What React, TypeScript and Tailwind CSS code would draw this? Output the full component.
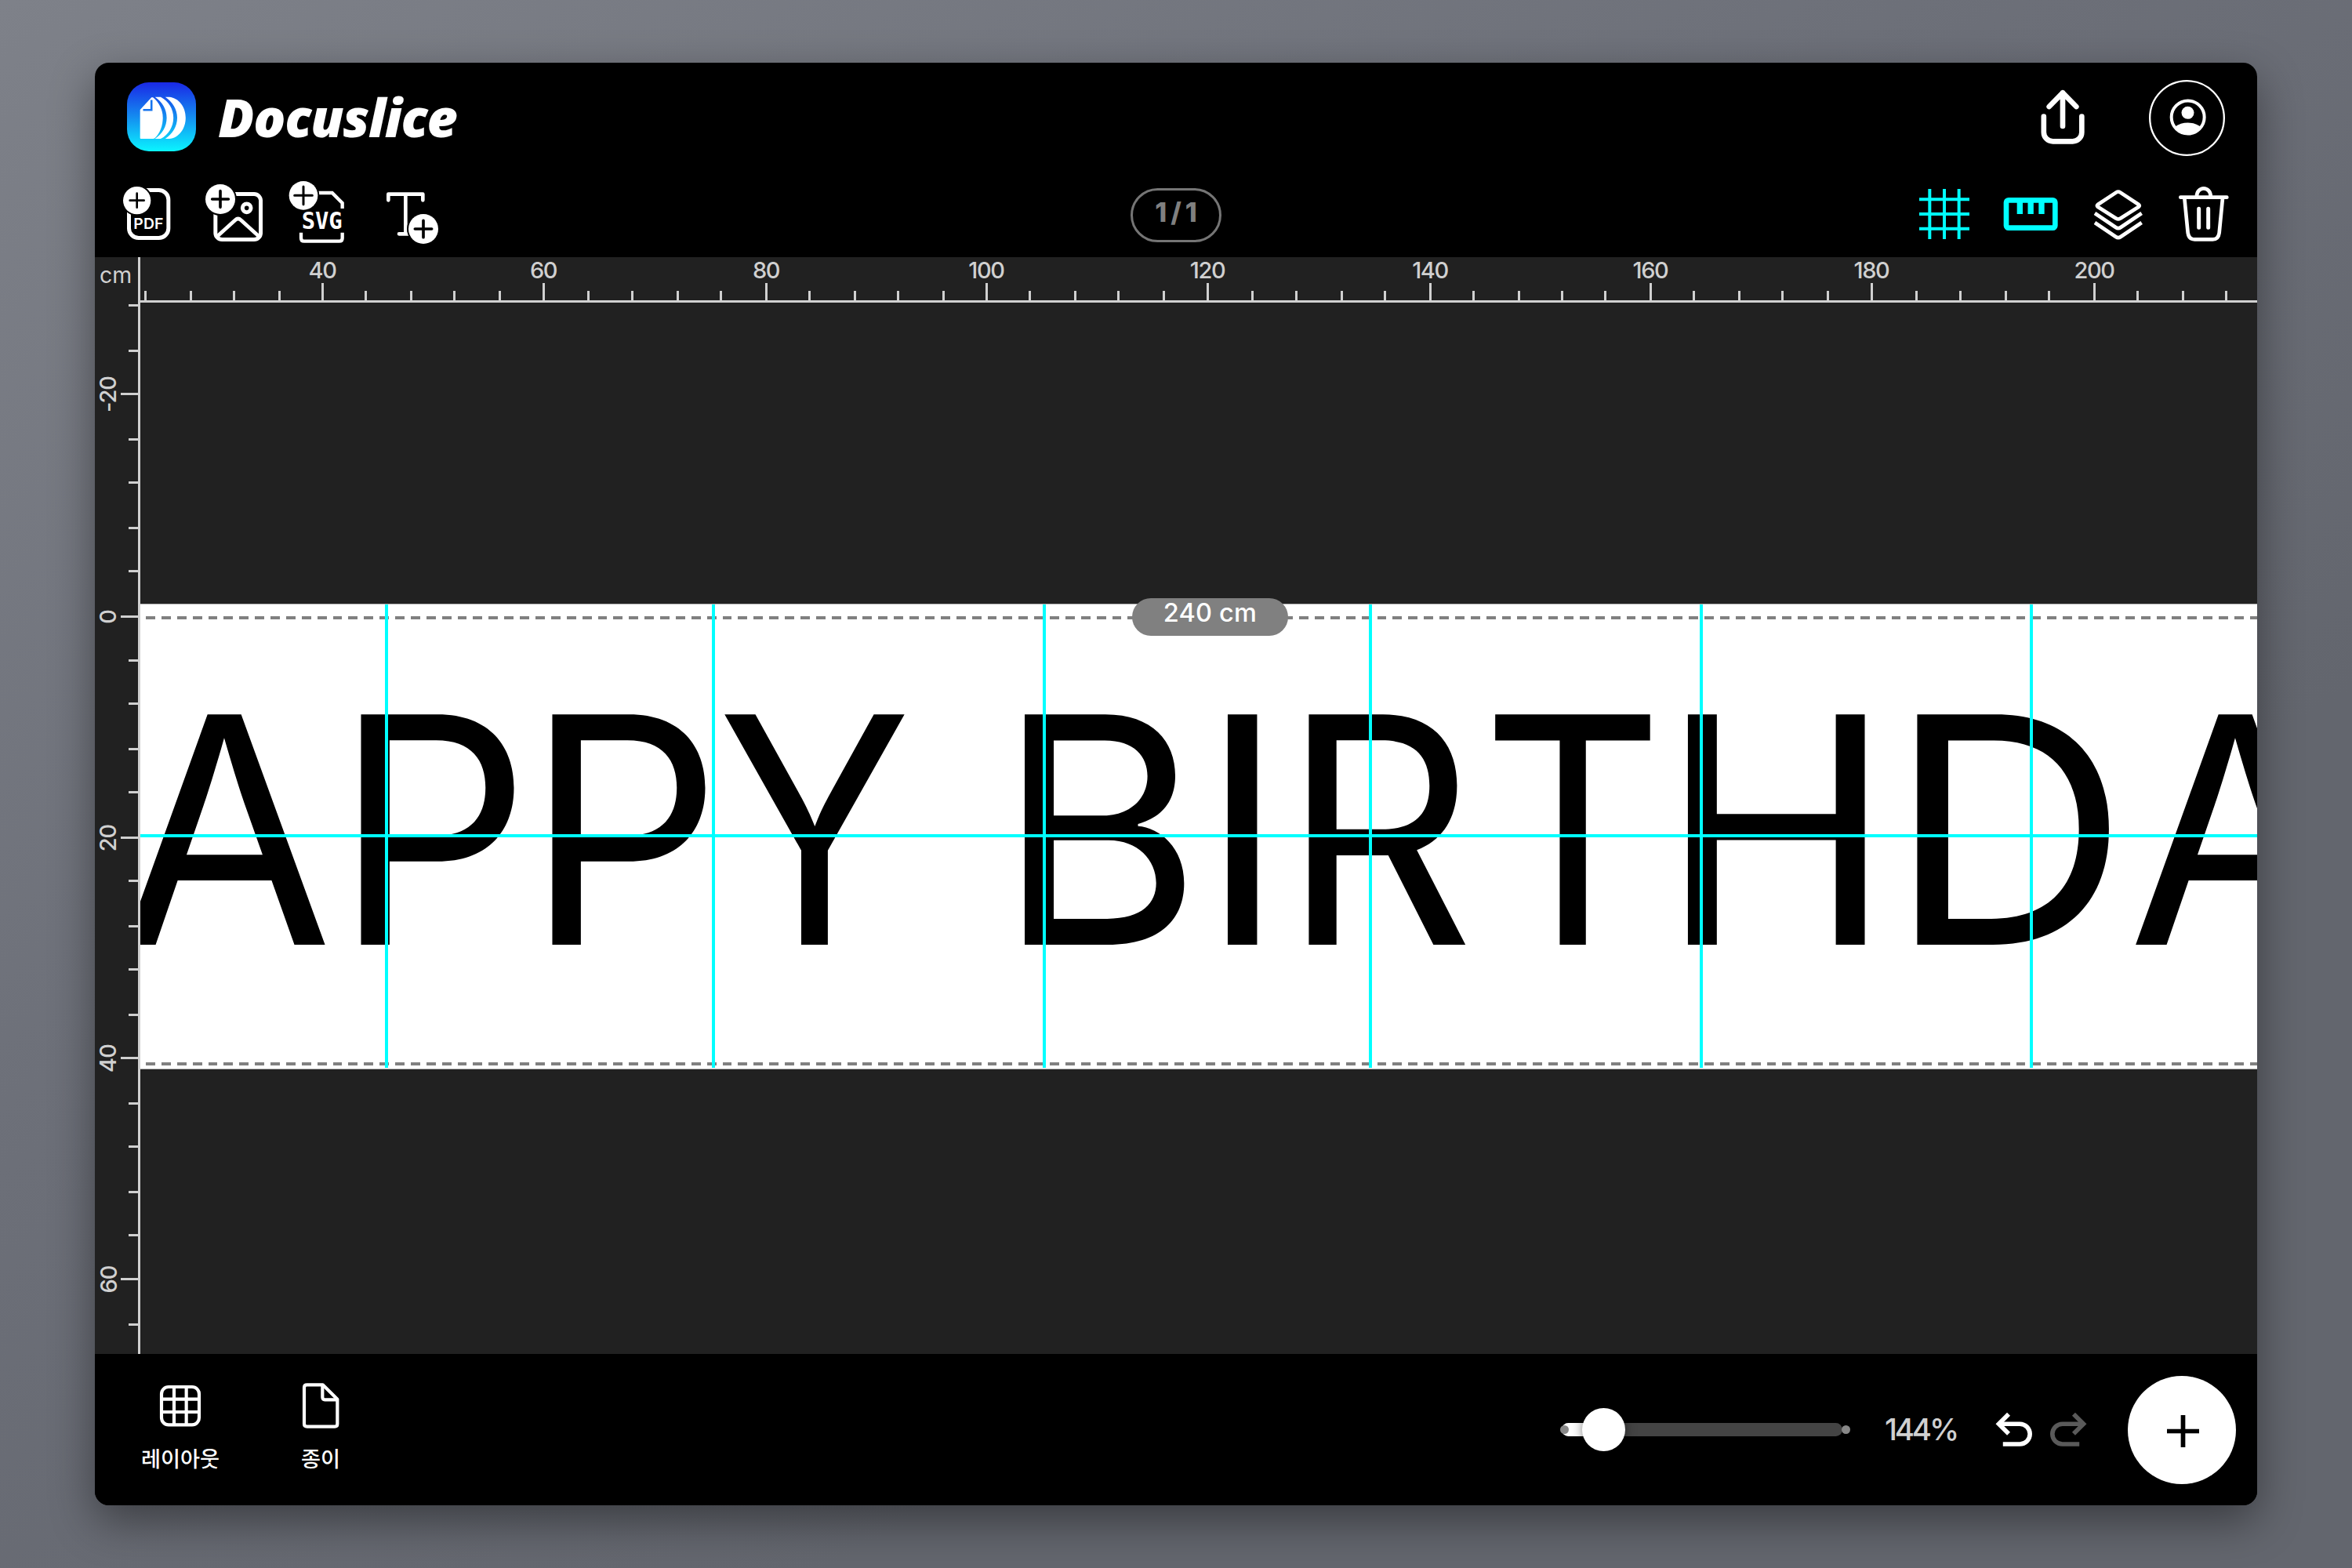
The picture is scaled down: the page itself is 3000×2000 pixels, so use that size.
import React from 'react';

interface RulerTick {
  pos: number;
  value: number | null;
}

interface Letter {
  char: string;
  left: number;
  scale: number;
}

// One ruler unit is snapped to a whole device step, which is why gaps differ by a few px
const STEP = 2.759;
const TICK_SPACING = 20.465;

const buildTicks = (origin: number, start: number, from: number, to: number, valueAtZero: number): RulerTick[] => {
  const ticks: RulerTick[] = [];
  for (let k = from; k <= to; k++) {
    const n = Math.floor(start + k * TICK_SPACING);
    ticks.push({
      pos: Math.round(n * STEP - origin),
      value: k % 5 === 0 ? valueAtZero + k * 4 : null,
    });
  }
  return ticks;
};

const horizontalTicks = buildTicks(58.6, 105.49, -4, 43, 40);
const verticalTicks = buildTicks(306.9, 256, -7, 16, 0);

const verticalGuides = [312, 729, 1151, 1567, 1989, 2410];

const bannerLetters: Letter[] = [
  { char: 'A', left: -30, scale: 0.99 },
  { char: 'P', left: 246.5, scale: 0.972 },
  { char: 'P', left: 491.2, scale: 0.972 },
  { char: 'Y', left: 736, scale: 0.905 },
  { char: 'B', left: 1093, scale: 0.988 },
  { char: 'I', left: 1351.5, scale: 1 },
  { char: 'R', left: 1456.5, scale: 0.942 },
  { char: 'T', left: 1711, scale: 0.89 },
  { char: 'H', left: 1939, scale: 0.985 },
  { char: 'D', left: 2228.5, scale: 1.055 },
  { char: 'A', left: 2535, scale: 0.99 },
];

const PlusBadge = ({ cx, cy, r, arm, width }: { cx: number; cy: number; r: number; arm: number; width: number }) => (
  <>
    <circle cx={cx} cy={cy} r={r + 6} fill="#000" />
    <circle cx={cx} cy={cy} r={r} fill="#fff" />
    <path
      d={`M${cx - arm} ${cy}H${cx + arm}M${cx} ${cy - arm}V${cy + arm}`}
      stroke="#000"
      strokeWidth={width}
      strokeLinecap="round"
    />
  </>
);

const LogoMark = () => (
  <svg className="size-[88px] shrink-0" viewBox="0 0 88 88" fill="none">
    <defs>
      <linearGradient id="logo" x1="0" y1="0" x2="0" y2="1">
        <stop offset="0" stopColor="#1a28e6" />
        <stop offset="0.5" stopColor="#148cf0" />
        <stop offset="1" stopColor="#0af5ff" />
      </linearGradient>
    </defs>
    <rect width="88" height="88" rx="28" fill="url(#logo)" />
    <path d="M16.7 35 31 19.4Q32 18.6 33.5 19.6C41 26 45.7 35 45.7 45.2S42 65 35.4 71.2Q34.5 72 33 72H17.7Q16.7 72 16.7 71Z" fill="#fff" />
    <path d="M20.5 35.3H31.2V22.5" stroke="#1674ee" strokeWidth="2.6" />
    <path d="M35.7 18.7H43C53 24 59.2 34 59.2 45.2S53 67 43 72H35.7C45 66 50.6 56 50.6 45.2S45 25 35.7 18.7Z" fill="#fff" />
    <path d="M48.8 18.7H54C66 20 74.8 31 74.8 45.2S66 71 54 72H48.8C58 66 64 56 64 45.2S58 25 48.8 18.7Z" fill="#fff" />
  </svg>
);

const AddPdfIcon = () => (
  <svg className="w-[65px] h-[82px]" viewBox="165 510 195 246" fill="none">
    <rect x="193.5" y="547.5" width="151" height="183" rx="37" stroke="#fff" strokeWidth="15" />
    <PlusBadge cx={224} cy={587} r={53} arm={27} width={8} />
    <text x="211" y="697" fontSize="58" textLength="114" className="font-['Inter'] font-semibold" fill="#fff">PDF</text>
  </svg>
);

const AddImageIcon = () => (
  <svg className="w-[77px] h-[82px]" viewBox="480 510 231 246" fill="none" stroke="#fff" strokeWidth="15">
    <rect x="524.5" y="562.5" width="173" height="174" rx="25" />
    <circle cx="644" cy="616" r="16" />
    <path d="M532 724 600 662Q611 652 622 662L690 724" strokeWidth="14" />
    <g stroke="none">
      <PlusBadge cx={543} cy={582} r={57} arm={31} width={11} />
    </g>
  </svg>
);

const AddSvgIcon = () => (
  <svg className="w-[74px] h-[82px]" viewBox="801 510 222 246" fill="none" stroke="#fff" strokeWidth="13">
    <path d="M900 558H971L1010 597V618" />
    <path d="M852 710V731Q852 743 864 743H998Q1010 743 1010 731V710" />
    <text
      x="854"
      y="697"
      fontSize="92"
      textLength="156"
      lengthAdjust="spacingAndGlyphs"
      className="font-['DejaVu_Sans_Mono'] font-bold"
      fill="#fff"
      stroke="none"
    >
      SVG
    </text>
    <g stroke="none">
      <PlusBadge cx={861} cy={568} r={55} arm={34} width={9} />
    </g>
  </svg>
);

const AddTextIcon = () => (
  <svg className="w-[71px] h-[82px]" viewBox="1170 510 213 246" fill="none">
    <path
      d="M1186 586V563H1318V586M1252 563V715M1227 715H1265"
      stroke="#fff"
      strokeWidth="14"
      strokeLinecap="round"
      strokeLinejoin="round"
    />
    <PlusBadge cx={1320} cy={696} r={57} arm={32} width={11} />
  </svg>
);

const ShareIcon = () => (
  <svg className="w-[62px] h-[75px]" viewBox="600 155 186 225" fill="none" stroke="#fff" strokeWidth="20" strokeLinecap="round" strokeLinejoin="round">
    <path d="M693 174V302M641 227 693 174 745 227" />
    <path d="M620.5 265V325A35 35 0 0 0 655.5 360H731A35 35 0 0 0 766 325V265" />
  </svg>
);

const AccountIcon = () => (
  <svg className="size-[97px]" viewBox="1024.5 124.5 291 291" fill="none">
    <circle cx="1170" cy="270" r="142" stroke="#fff" strokeWidth="7" />
    <circle cx="1173.5" cy="267" r="63" stroke="#fff" strokeWidth="12" />
    <circle cx="1173" cy="250" r="24" fill="#fff" />
    <path d="M1124 304Q1145 288 1173.5 288T1223 304Q1206 334 1173.5 334T1124 304Z" fill="#fff" />
  </svg>
);

const GridLinesIcon = () => (
  <svg className="w-[68px] h-[75px]" viewBox="136 525 204 225" stroke="#00ffff" strokeWidth="12">
    <path d="M182 543V735M238 543V735M294 543V735M142 582.5H334M142 639H334M142 695H334" />
  </svg>
);

const RulerIcon = () => (
  <svg className="w-[72px] h-[75px]" viewBox="460 525 216 225" fill="none" stroke="#00ffff">
    <rect x="475" y="586" width="187" height="106" rx="9" strokeWidth="20" />
    <path d="M527 590V639M568.5 590V639M610 590V639" strokeWidth="22" />
  </svg>
);

const LayersIcon = () => (
  <svg className="w-[64px] h-[75px]" viewBox="810 525 192 225" fill="none" stroke="#fff" strokeWidth="14" strokeLinejoin="round">
    <path d="M898 556Q905.5 551 913 556L984 603Q989 607 984 611L913 656Q905.5 661 898 656L827 611Q822 607 827 603Z" />
    <path d="M816 636 896 690Q905.5 696.5 915 690L995 636" />
    <path d="M816 672 896 726Q905.5 732.5 915 726L995 672" />
  </svg>
);

const TrashIcon = () => (
  <svg className="w-[68px] h-[75px]" viewBox="1130 525 204 225" fill="none" stroke="#fff" strokeWidth="14" strokeLinecap="round">
    <path d="M1143 575H1320" />
    <path d="M1205 570A26.5 29 0 0 1 1258 570" strokeLinecap="butt" />
    <path d="M1158 578 1171 711Q1174 736 1197 736H1266Q1288 736 1291 711L1304 578" />
    <path d="M1213 619V691M1249 619V691" strokeWidth="15" />
  </svg>
);

const LayoutIcon = () => (
  <svg className="size-[54px]" viewBox="308 194 162 162" fill="none" stroke="#fff" strokeWidth="12.5">
    <rect x="317" y="203" width="144" height="145" rx="27" />
    <path d="M365 203V348M412 203V348M317 250H461M317 299H461" />
  </svg>
);

const PaperIcon = () => (
  <svg className="w-[48px] h-[60px]" viewBox="863 185 144 180" fill="none" stroke="#fff" strokeWidth="12.5" strokeLinejoin="round">
    <path d="M883 195H943L999 250V345Q999 355 989 355H883Q872 355 872 345V205Q872 195 883 195Z" />
    <path d="M942 197V243Q942 252 951 252H998" />
  </svg>
);

const UndoIcon = ({ className }: { className?: string }) => (
  <svg className={className} viewBox="495 183 144 136" fill="none" stroke="currentColor" strokeWidth="17">
    <path d="M546 191 508 229 546 267" />
    <path d="M510 229H589A39 39 0 0 1 589 307H524" />
  </svg>
);

const TopBar = () => (
  <div className="flex h-[140px] items-center justify-between pl-[41px] pr-[41px]">
    <div className="flex items-center pb-[2px]">
      <LogoMark />
      <h1 className="ml-7 font-['Open_Sans'] text-[68px] font-extrabold italic leading-none tracking-[-1.3px] text-white">
        Docuslice
      </h1>
    </div>
    <div className="flex items-center gap-[79px]">
      <button className="pb-[2px]"><ShareIcon /></button>
      <button><AccountIcon /></button>
    </div>
  </div>
);

const Toolbar = () => (
  <div className="grid h-[108px] grid-cols-[1fr_auto_1fr] items-center pl-[34px] pr-[34px]">
    <div className="mb-[6px] flex items-center">
      <button><AddPdfIcon /></button>
      <button className="ml-10"><AddImageIcon /></button>
      <button className="ml-[30px]"><AddSvgIcon /></button>
      <button className="ml-[49px]"><AddTextIcon /></button>
    </div>
    <div className="flex h-[69px] w-[116px] items-center justify-center rounded-full border-[3px] border-[#757575] pb-[6px] pl-[5px] font-['Inter'] text-[34px] font-extrabold leading-none tracking-[5px] text-[#808080]">
      1/1
    </div>
    <div className="mb-[3px] flex items-center justify-end">
      <button><GridLinesIcon /></button>
      <button className="ml-10"><RulerIcon /></button>
      <button className="ml-11"><LayersIcon /></button>
      <button className="ml-[43px]"><TrashIcon /></button>
    </div>
  </div>
);

const HorizontalRuler = () => (
  <div className="relative overflow-hidden border-b-[3px] border-[#d0d0d0]">
    {horizontalTicks.map(({ pos, value }) => (
      <div key={pos} className="absolute bottom-0" style={{ left: pos }}>
        <div className={value === null ? 'h-3 w-[3px] bg-[#d0d0d0]' : 'h-[22px] w-[3px] bg-[#d0d0d0]'} />
        {value !== null && (
          <span className="absolute bottom-[24px] left-px -translate-x-1/2 text-[29px] font-[450] leading-none tracking-[-1.4px]">
            {value}
          </span>
        )}
      </div>
    ))}
  </div>
);

const VerticalRuler = () => (
  <div className="relative overflow-hidden border-r-[3px] border-[#d0d0d0]">
    {verticalTicks.map(({ pos, value }) => (
      <div key={pos} className="absolute right-0" style={{ top: pos }}>
        <div className={value === null ? 'h-[3px] w-3 bg-[#d0d0d0]' : 'h-[3px] w-[22px] bg-[#d0d0d0]'} />
        {value !== null && (
          <span className="absolute right-[38.5px] top-[1.5px] -translate-y-1/2 translate-x-1/2 -rotate-90 text-[29px] font-[450] leading-none tracking-[-1px]">
            {value}
          </span>
        )}
      </div>
    ))}
  </div>
);

const Canvas = () => (
  <div className="relative overflow-hidden">
    {/* Paper */}
    <div className="absolute inset-x-0 top-[384px] h-[594px] border-y border-[#b0b0b0] bg-white" />
    <div className="absolute left-[7px] right-0 top-[400px] h-1 bg-[repeating-linear-gradient(90deg,#808080_0px_11.9px,transparent_11.9px_19.88px)]" />
    <div className="absolute left-[7px] right-0 top-[969px] h-1 bg-[repeating-linear-gradient(90deg,#808080_0px_11.9px,transparent_11.9px_19.88px)]" />

    {/* Banner text */}
    <h2 className="text-black">
      {bannerLetters.map(({ char, left, scale }, i) => (
        <span
          key={i}
          className="absolute top-[471.4px] origin-left text-[403.6px] font-[440] leading-none"
          style={{ left, transform: `scaleX(${scale})` }}
        >
          {char}
        </span>
      ))}
    </h2>

    {/* Page guides */}
    {verticalGuides.map((left) => (
      <div key={left} className="absolute top-[385px] h-[591px] w-1 bg-[#00ffff]" style={{ left }} />
    ))}
    <div className="absolute inset-x-0 top-[678px] h-1 bg-[#00ffff]" />

    {/* Width label */}
    <div className="absolute left-[1265px] top-[377px] flex h-[48px] w-[199px] justify-center rounded-[24px] bg-[#808080] pt-[3px] text-[32.5px] font-[450] leading-none tracking-[0.2px] text-white">
      240 cm
    </div>
  </div>
);

const BottomBar = () => (
  <div className="flex h-[193px] items-center justify-between bg-black pl-[59px] pr-[27px] text-white">
    <div className="flex items-end gap-[104px] pb-[10px] text-[27.2px] font-medium leading-[30px] font-['Noto_Sans_CJK_KR',sans-serif]">
      <button className="flex flex-col items-center">
        <LayoutIcon />
        <span className="mt-6">레이아웃</span>
      </button>
      <button className="flex flex-col items-center">
        <PaperIcon />
        <span className="mt-[21px]">종이</span>
      </button>
    </div>
    <div className="flex items-center">
      <div className="relative h-[17px] w-[358px] rounded-full bg-[#444]">
        <div className="h-full w-12 rounded-full bg-white" />
        <div className="absolute left-[-2px] top-[3px] size-[11px] rounded-full bg-[#888]" />
        <div className="absolute right-[-10px] top-[3px] size-[11px] rounded-full bg-[#888]" />
        <div className="absolute left-[26px] top-[-19px] size-[55px] rounded-full bg-white shadow-[0_0_14px_rgba(0,0,0,0.5)]" />
      </div>
      <span className="ml-[54px] w-[96px] font-['Inter'] text-[38.5px] font-[450] leading-none tracking-[-3.2px] text-[#d0d0d0]">144%</span>
      <button className="ml-[45px]"><UndoIcon className="h-[45px] w-12 text-white" /></button>
      <button className="ml-[21px]"><UndoIcon className="h-[45px] w-12 -scale-x-100 text-[#5a5a5a]" /></button>
      <button className="ml-[52px] flex size-[138px] items-center justify-center rounded-full bg-white">
        <svg className="ml-[3px] mt-[3px] size-[41px]" viewBox="0 0 41 41" stroke="#000" strokeWidth="5.7">
          <path d="M0 20.5H41M20.5 0V41" />
        </svg>
      </button>
    </div>
  </div>
);

export default function App() {
  return (
    <div className="h-[2000px] w-[3000px] bg-[linear-gradient(150deg,#7e8189_0%,#6c6f78_40%,#63666e_70%,#63666e_100%)] pl-[121px] pt-20">
      <div className="h-[1840px] w-[2758px] rounded-[18px] shadow-[0_20px_56px_rgba(0,0,0,0.42)]">
        <div className="flex h-full flex-col overflow-hidden rounded-[18px] bg-black">
          <header className="h-[248px] shrink-0">
            <TopBar />
            <Toolbar />
          </header>
          <main className="grid flex-1 grid-cols-[58px_1fr] grid-rows-[58px_1fr] bg-[#212121] font-['Inter'] text-[#d0d0d0]">
            <div className="border-r-[3px] border-[#d0d0d0] pl-[6px] pt-[9px] text-[28.5px] leading-none">cm</div>
            <HorizontalRuler />
            <VerticalRuler />
            <Canvas />
          </main>
          <BottomBar />
        </div>
      </div>
    </div>
  );
}
